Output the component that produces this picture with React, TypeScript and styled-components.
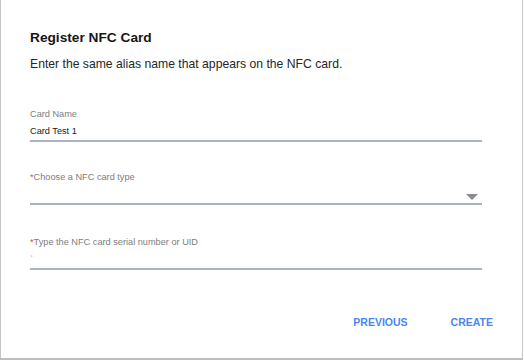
import React from "react";
import styled, { createGlobalStyle } from "styled-components";

const Global = createGlobalStyle`
  html, body { margin: 0; padding: 0; background: #ffffff; }
  body { font-family: "Liberation Sans", Arial, sans-serif; }
  * { box-sizing: border-box; }
`;

const Dialog = styled.div`
  width: 523px;
  height: 360px;
  background: #ffffff;
  border-left: 1px solid #c6c6c6;
  border-right: 1px solid #c6c6c6;
  border-bottom: 2px solid #bdbdbd;
  padding: 29px 40px 0 29px;
  display: flex;
  flex-direction: column;
`;

const Title = styled.h2`
  margin: 0;
  font-size: 13.7px;
  line-height: 17px;
  font-weight: 700;
  color: #161616;
`;

const Subtitle = styled.p`
  margin: 11px 0 0;
  font-size: 12.2px;
  line-height: 15px;
  color: #262626;
`;

const Field = styled.div<{ $mt: number }>`
  margin-top: ${(p) => p.$mt}px;
  display: flex;
  flex-direction: column;
`;

const Label = styled.label`
  font-size: 9.2px;
  line-height: 11px;
  color: #7d7d7d;
`;

const Req = styled.span`
  color: #e0453a;
`;

const Value = styled.div<{ $faint?: boolean }>`
  position: relative;
  height: 22px;
  border-bottom: 2px solid #aab3c3;
  display: flex;
  align-items: flex-end;
  padding-bottom: 3px;
  font-size: 9.2px;
  line-height: 11px;
  color: ${(p) => (p.$faint ? "#a8a8a8" : "#1a1a1a")};
`;

const Arrow = styled.span`
  position: absolute;
  right: 4px;
  bottom: 3px;
  width: 0;
  height: 0;
  border-left: 6.5px solid transparent;
  border-right: 6.5px solid transparent;
  border-top: 6px solid #8b8b8b;
`;

const Footer = styled.div`
  margin-top: 46px;
  margin-right: -11px;
  display: flex;
  justify-content: flex-end;
  gap: 43px;
`;

const TextButton = styled.button`
  background: none;
  border: none;
  padding: 0;
  font-family: "Liberation Sans", Arial, sans-serif;
  font-size: 10.5px;
  line-height: 12px;
  font-weight: 700;
  color: #4a88ef;
  cursor: pointer;
`;

export default function App() {
  return (
    <>
      <Global />
      <Dialog>
        <Title>Register NFC Card</Title>
        <Subtitle>Enter the same alias name that appears on the NFC card.</Subtitle>
        <Field $mt={37}>
          <Label>Card Name</Label>
          <Value>Card Test 1</Value>
        </Field>
        <Field $mt={30}>
          <Label>
            <Req>*</Req>Choose a NFC card type
          </Label>
          <Value>
            <Arrow />
          </Value>
        </Field>
        <Field $mt={32}>
          <Label>
            <Req>*</Req>Type the NFC card serial number or UID
          </Label>
          <Value $faint>`</Value>
        </Field>
        <Footer>
          <TextButton>PREVIOUS</TextButton>
          <TextButton>CREATE</TextButton>
        </Footer>
      </Dialog>
    </>
  );
}
